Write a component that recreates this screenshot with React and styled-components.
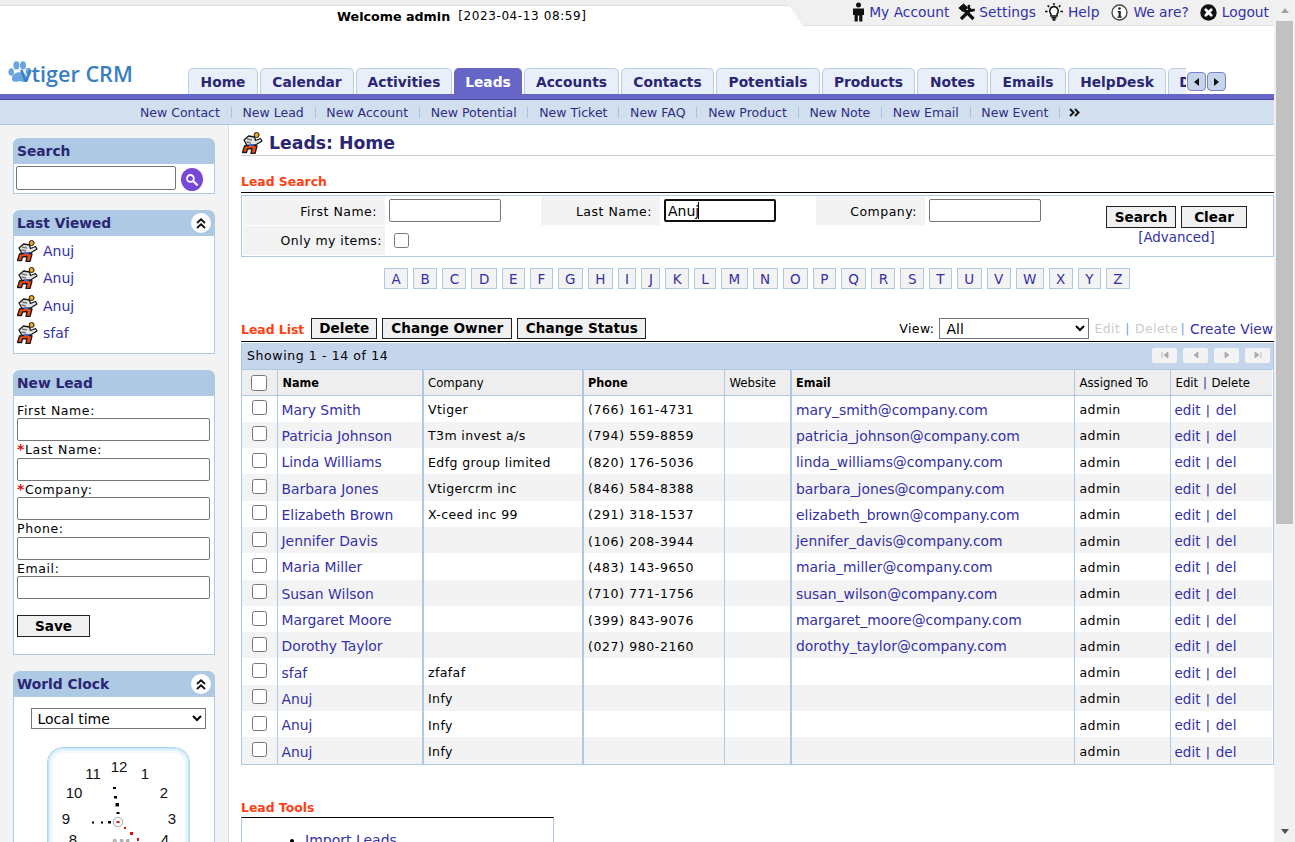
import React from 'react';
import styled, { createGlobalStyle, css } from 'styled-components';

const GlobalStyle = createGlobalStyle`
	html, body { margin: 0; padding: 0; height: 100%; overflow: hidden; background: #fff; }
	body { font-family: "DejaVu Sans", Verdana, sans-serif; font-size: 12.5px; color: #000; }
	* { box-sizing: border-box; }
	a { color: #2d2a8e; text-decoration: none; }
`;

const tabs = [
	['Home', 70], ['Calendar', 94], ['Activities', 96], ['Leads', 68], ['Accounts', 95], ['Contacts', 93],
	['Potentials', 104], ['Products', 93], ['Notes', 71], ['Emails', 76], ['HelpDesk', 98], ['Documents', 110],
];
const subLinks = ['New Contact', 'New Lead', 'New Account', 'New Potential', 'New Ticket', 'New FAQ', 'New Product', 'New Note', 'New Email', 'New Event'];
const letters = 'ABCDEFGHIJKLMNOPQRSTUVWXYZ'.split('');
const leads = [
	['Mary Smith', 'Vtiger', '(766) 161-4731', 'mary_smith@company.com'],
	['Patricia Johnson', 'T3m invest a/s', '(794) 559-8859', 'patricia_johnson@company.com'],
	['Linda Williams', 'Edfg group limited', '(820) 176-5036', 'linda_williams@company.com'],
	['Barbara Jones', 'Vtigercrm inc', '(846) 584-8388', 'barbara_jones@company.com'],
	['Elizabeth Brown', 'X-ceed inc 99', '(291) 318-1537', 'elizabeth_brown@company.com'],
	['Jennifer Davis', '', '(106) 208-3944', 'jennifer_davis@company.com'],
	['Maria Miller', '', '(483) 143-9650', 'maria_miller@company.com'],
	['Susan Wilson', '', '(710) 771-1756', 'susan_wilson@company.com'],
	['Margaret Moore', '', '(399) 843-9076', 'margaret_moore@company.com'],
	['Dorothy Taylor', '', '(027) 980-2160', 'dorothy_taylor@company.com'],
	['sfaf', 'zfafaf', '', ''],
	['Anuj', 'Infy', '', ''],
	['Anuj', 'Infy', '', ''],
	['Anuj', 'Infy', '', ''],
];

const LeadIcon = () => (
	<svg width="22" height="22" viewBox="0 0 22 22" style={{ flex: 'none' }}>
		<path d="M8 13 L3.5 14 L1.5 20.5 L5.5 20.5 L6.5 17 L11 16.5 L10 21.5 L14 21.5 L16 14 L11 13 Z" fill="#ee4a10" stroke="#1a1a1a" strokeWidth="1.3" strokeLinejoin="round" />
		<path d="M3 8 L7.5 4 L13.5 5 L14.5 8.5 L19.5 6.5 L21 9 L14.5 13 L6 13.5 Z" fill="#e4e4e4" stroke="#1a1a1a" strokeWidth="1.3" strokeLinejoin="round" />
		<path d="M6 7 L11 8 M5.5 10 L10 11" stroke="#777" strokeWidth="1.3" />
		<path d="M8 12.6 L13 12.2 L13 13.8 L8 14.2 Z" fill="#4a5ad8" />
		<circle cx="15.6" cy="3" r="2.5" fill="#f2a818" stroke="#1a1a1a" strokeWidth="1" />
	</svg>
);

const LogoMark = () => (
	<svg width="24" height="23" viewBox="0 0 24 23" style={{ flex: 'none' }}>
		<g fill="#69a6e0">
			<ellipse cx="3.2" cy="11" rx="2.8" ry="3.8" />
			<ellipse cx="8.4" cy="4.4" rx="3" ry="4.2" />
			<ellipse cx="15" cy="4.4" rx="3" ry="4.2" />
			<ellipse cx="20.4" cy="10.5" rx="2.8" ry="3.8" />
			<path d="M4 16 C6 9.5 17 9.5 19 16 C20 20.5 16.5 22 11.5 20 C7 22 3 20.5 4 16 Z" />
		</g>
	</svg>
);

const PersonIcon = () => (
	<svg width="13" height="20" viewBox="0 0 13 20"><circle cx="6.5" cy="3" r="2.5" fill="#111" /><path d="M1 6.5 H12 V13 H10.4 V19.5 H7.2 V13.5 H5.8 V19.5 H2.6 V13 H1 Z" fill="#111" /></svg>
);
const ToolsIcon = () => (
	<svg width="18" height="18" viewBox="0 0 18 18" fill="none" stroke="#111"><path d="M3 16 L13 6" strokeWidth="3.2" /><path d="M15.5 16 L6 6.5" strokeWidth="3.2" /><path d="M0.8 5 L5.6 1 L9.4 4.6 L5 8.6 Z" fill="#111" strokeWidth="1" /><path d="M11 1.8 L10.6 5.2 L13.4 7.6 L16.8 6.8" strokeWidth="2.6" /></svg>
);
const BulbIcon = () => (
	<svg width="18" height="18" viewBox="0 0 18 18" fill="none" stroke="#111" strokeWidth="1.5"><path d="M9 3.6 A4.4 4.4 0 0 1 12 11 V13 H6 V11 A4.4 4.4 0 0 1 9 3.6 Z" fill="#fff" /><path d="M6.6 14.8 H11.4 M7.6 16.8 H10.4" strokeWidth="1.8" /><path d="M9 0 V2.2 M2.6 2.4 L4.2 4 M15.4 2.4 L13.8 4 M0 8.4 H2.6 M15.4 8.4 H18" /></svg>
);
const InfoIcon = () => (
	<svg width="17" height="17" viewBox="0 0 17 17"><circle cx="8.5" cy="8.5" r="7.5" fill="#fff" stroke="#444" strokeWidth="1.3" /><circle cx="8.5" cy="4.5" r="1.3" fill="#222" /><path d="M6.6 7 H9.8 V12.6 H10.8 V13.8 H6.4 V12.6 H7.6 V8.2 H6.6 Z" fill="#222" /></svg>
);
const LogoutIcon = () => (
	<svg width="17" height="17" viewBox="0 0 17 17"><circle cx="8.5" cy="8.5" r="8.2" fill="#111" /><path d="M5.8 5.8 L11.2 11.2 M11.2 5.8 L5.8 11.2" stroke="#fff" strokeWidth="2.8" strokeLinecap="round" /></svg>
);
const Collapse = () => (
	<CollapseBtn>
		<svg width="10" height="11" viewBox="0 0 10 11" fill="none" stroke="#111" strokeWidth="1.9"><path d="M1 5 L5 1.4 L9 5" /><path d="M1 10 L5 6.4 L9 10" /></svg>
	</CollapseBtn>
);

const ClockFace = () => {
	const nums = [['12', 72, 25], ['11', 46, 32], ['1', 98, 32], ['10', 27, 51], ['2', 117, 51], ['9', 19, 77], ['3', 125, 77], ['8', 26, 98], ['4', 118, 98]];
	const dots = [[66, 40, 3, 2], [67, 49, 3, 2.5], [68.5, 56, 3.5, 3.5], [69.5, 65, 3, 2], [45, 74.5, 2, 2], [54, 74.5, 2, 2], [61, 74, 3, 2.5]];
	const red = [[77, 80, 2, 2], [83, 85, 3, 3], [90, 91, 2, 3]];
	return (
		<svg width="143" height="96" viewBox="0 0 143 96">
			<rect x="0.5" y="0.5" width="142" height="130" rx="15" fill="#fff" stroke="#a4d0ea" />
			<rect x="1.5" y="1.5" width="140" height="128" rx="14" fill="none" stroke="#c6e6f6" strokeWidth="1.5" />
			<rect x="3" y="3" width="137" height="125" rx="13" fill="none" stroke="#e0f2fb" strokeWidth="2" />
			<rect x="5" y="5" width="133" height="121" rx="12" fill="none" stroke="#f2fafe" strokeWidth="2" />
			{nums.map(([n, x, y]) => (
				<text key={n} x={x} y={y} textAnchor="middle" fontFamily="Liberation Sans" fontSize="15" fill="#111">{n}</text>
			))}
			{dots.map(([x, y, w, h], i) => <rect key={i} x={x} y={y} width={w} height={h} fill="#000" />)}
			<circle cx="71" cy="75" r="4.6" fill="#fff" stroke="#bbb" strokeWidth="1.4" />
			<rect x="69.5" y="74" width="3" height="2" fill="#e01010" />
			{red.map(([x, y, w, h], i) => <rect key={i} x={x} y={y} width={w} height={h} fill="#e01010" />)}
			<text x="73" y="101" textAnchor="middle" fontFamily="Liberation Sans" fontSize="13" fontWeight="700" fill="#aaa">AM</text>
		</svg>
	);
};

export default function App() {
	return (
		<Shell>
			<GlobalStyle />
			<Page>
				<TopStrip>
					<Welcome>
						<b>Welcome admin</b>
						<DateStamp>[2023-04-13 08:59]</DateStamp>
					</Welcome>
					<UserMenu>
						<UserLink $gap={4}><PersonIcon /><a href="#a">My Account</a></UserLink>
						<UserLink $gap={3} $ml={9}><ToolsIcon /><a href="#s">Settings</a></UserLink>
						<UserLink $gap={5} $ml={9}><BulbIcon /><a href="#h">Help</a></UserLink>
						<UserLink $gap={5} $ml={12}><InfoIcon /><a href="#w">We are?</a></UserLink>
						<UserLink $gap={5} $ml={11}><LogoutIcon /><a href="#l">Logout</a></UserLink>
					</UserMenu>
				</TopStrip>

				<BrandRow>
					<Logo><LogoMark /><LogoText>vtiger CRM</LogoText></Logo>
					<TabViewport>
						<TabTrack>
							{tabs.map(([name, w]) => (
								<Tab key={name} $w={w} $active={name === 'Leads'}>{name}</Tab>
							))}
						</TabTrack>
					</TabViewport>
					<Arrows>
						<ArrowBtn><Tri $left /></ArrowBtn>
						<ArrowBtn><Tri /></ArrowBtn>
					</Arrows>
				</BrandRow>
				<PurpleBar />
				<SubNav>
					{subLinks.map(l => (
						<React.Fragment key={l}>
							<SubLink href="#n">{l}</SubLink>
							<SubSep />
						</React.Fragment>
					))}
					<More>
						<svg width="11" height="9" viewBox="0 0 11 9" fill="none" stroke="#111" strokeWidth="2"><path d="M1 1 L4.5 4.5 L1 8" /><path d="M6 1 L9.5 4.5 L6 8" /></svg>
					</More>
				</SubNav>

				<Body>
					<Sidebar>
						<Panel $mb={16}>
							<PanelHead>Search</PanelHead>
							<SearchBody>
								<SideSearch />
								<SearchGo>
									<svg width="14" height="14" viewBox="0 0 14 14" fill="none" stroke="#fff"><circle cx="5.4" cy="5.4" r="3.4" strokeWidth="1.8" /><path d="M8 8 L12.6 12.4" strokeWidth="2.2" /></svg>
								</SearchGo>
							</SearchBody>
						</Panel>

						<Panel $mb={16}>
							<PanelHead>Last Viewed<Collapse /></PanelHead>
							<ViewedList>
								{['Anuj', 'Anuj', 'Anuj', 'sfaf'].map((n, i) => (
									<ViewedRow key={i}><LeadIcon /><a href="#v">{n}</a></ViewedRow>
								))}
							</ViewedList>
						</Panel>

						<Panel $mb={16}>
							<PanelHead>New Lead</PanelHead>
							<LeadForm>
								<FieldLabel>First Name:</FieldLabel><FieldInput />
								<FieldLabel><Req>*</Req>Last Name:</FieldLabel><FieldInput />
								<FieldLabel><Req>*</Req>Company:</FieldLabel><FieldInput />
								<FieldLabel>Phone:</FieldLabel><FieldInput />
								<FieldLabel>Email:</FieldLabel><FieldInput />
								<SaveBtn>Save</SaveBtn>
							</LeadForm>
						</Panel>

						<Panel>
							<PanelHead>World Clock<Collapse /></PanelHead>
							<ClockBody>
								<ClockSelect><option>Local time</option></ClockSelect>
								<ClockFace />
							</ClockBody>
						</Panel>
					</Sidebar>

					<Main>
						<PageTitle><LeadIcon />Leads: Home</PageTitle>

						<SectionTitle $top={17}>Lead Search</SectionTitle>
						<SearchBox>
							<SearchGrid>
								<SearchLabel $pr={8}>First Name:</SearchLabel>
								<SearchCell><SearchInput /></SearchCell>
								<SearchLabel $pr={8}>Last Name:</SearchLabel>
								<SearchCell>
									<SearchInput $focus defaultValue="Anuj" />
									<Caret />
								</SearchCell>
								<SearchLabel $pr={8}>Company:</SearchLabel>
								<SearchCell><SearchInput /></SearchCell>
								<SearchActions>
									<ActionRow>
										<SearchBtn $w={70}>Search</SearchBtn>
										<SearchBtn $w={66}>Clear</SearchBtn>
									</ActionRow>
									<AdvancedLink href="#adv">[Advanced]</AdvancedLink>
								</SearchActions>
								<SearchLabel $pr={3} $tight>Only my items:</SearchLabel>
								<SearchCell><OnlyCheck /></SearchCell>
							</SearchGrid>
						</SearchBox>

						<Alphabet>
							{letters.map(l => <Letter key={l} href="#l">{l}</Letter>)}
						</Alphabet>

						<ListBar>
							<ListLeft>
								<SectionTitle as="span">Lead List</SectionTitle>
								<SquareBtn $w={66} $ml={2}>Delete</SquareBtn>
								<SquareBtn $w={130}>Change Owner</SquareBtn>
								<SquareBtn $w={129}>Change Status</SquareBtn>
							</ListLeft>
							<ListRight>
								View:
								<ViewSelect><option>All</option></ViewSelect>
								<Muted>Edit</Muted>
								<Pipe>|</Pipe>
								<Muted>Delete</Muted>
								<Pipe $tight>|</Pipe>
								<CreateLink href="#cv">Create View</CreateLink>
							</ListRight>
						</ListBar>

						<ListBox>
							<PagerRow>
								Showing 1 - 14 of 14
								<Pager>
									{['M3 2 V8 M9 2 L5 5 L9 8 Z', 'M8 2 L4 5 L8 8 Z', 'M4 2 L8 5 L4 8 Z', 'M3 2 L7 5 L3 8 Z M9 2 V8'].map(d => (
										<PagerBtn key={d}><svg width="12" height="10" viewBox="0 0 12 10" fill="#aaa" stroke="#aaa" strokeWidth=".8"><path d={d} /></svg></PagerBtn>
									))}
								</Pager>
							</PagerRow>
							<Table>
								<colgroup>
									{[35, 146, 160, 141, 67, 283, 96, 102].map((w, i) => <col key={i} style={{ width: w }} />)}
								</colgroup>
								<thead>
									<tr>
										<Th $center><HeadCheck /></Th>
										<Th $pl={5}>Name</Th>
										<Th $regular $thick>Company</Th>
										<Th $thick>Phone</Th>
										<Th $regular $pl={5}>Website</Th>
										<Th $thick>Email</Th>
										<Th $regular $pl={5}>Assigned To</Th>
										<Th $regular $pl={5}>Edit <DarkPipe>|</DarkPipe> Delete</Th>
									</tr>
								</thead>
								<tbody>
									{leads.map((r, i) => (
										<Row key={i} $alt={i % 2 === 1}>
											<Td $center><RowCheck /></Td>
											<Td><a href="#r">{r[0]}</a></Td>
											<Td $thick>{r[1]}</Td>
											<Td $thick $wide>{r[2]}</Td>
											<Td />
											<Td $thick><a href="#m">{r[3]}</a></Td>
											<Td $pl={5}>admin</Td>
											<Td><ActionLink href="#e">edit</ActionLink> <DarkPipe>|</DarkPipe> <ActionLink href="#d">del</ActionLink></Td>
										</Row>
									))}
								</tbody>
							</Table>
						</ListBox>

						<SectionTitle $top={34}>Lead Tools</SectionTitle>
						<ToolsBox>
							<ul><li><a href="#i">Import Leads</a></li></ul>
						</ToolsBox>
					</Main>
				</Body>
			</Page>
			<ScrollRail>
				<ScrollArrow />
				<ScrollThumb />
				<ScrollArrow $down />
			</ScrollRail>
		</Shell>
	);
}

const Shell = styled.div`
	display: flex;
	height: 842px;
	width: 1295px;
	overflow: hidden;
`;

const Page = styled.div`
	width: 1274px;
	flex: none;
	overflow: hidden;
`;

const ScrollRail = styled.div`
	width: 21px;
	flex: none;
	display: flex;
	flex-direction: column;
	align-items: center;
	background: #f1f1f1;
`;

const ScrollArrow = styled.div`
	flex: none;
	height: 21px;
	width: 100%;
	display: flex;
	align-items: center;
	justify-content: center;
	&::before {
		content: '';
		border-left: 4.5px solid transparent;
		border-right: 4.5px solid transparent;
		${p => (p.$down ? 'border-top: 5px solid #505050;' : 'border-bottom: 5px solid #a3a3a3;')}
	}
`;

const ScrollThumb = styled.div`
	width: 17px;
	height: 503px;
	background: #c1c1c1;
	margin-bottom: auto;
`;

const TopStrip = styled.div`
	height: 26px;
	display: flex;
	background: linear-gradient(#eeeeee 0 5px, #dddddd 5px 6px, #ffffff 6px);
`;

const Welcome = styled.div`
	width: 785px;
	padding: 9px 0 0 337px;
	display: flex;
	gap: 8px;
	font-size: 12.7px;
	white-space: nowrap;
	b { font-weight: 700; }
`;

const DateStamp = styled.span`
	font-size: 12px;
	letter-spacing: 0.6px;
`;

const UserMenu = styled.div`
	flex: 1;
	display: flex;
	justify-content: flex-end;
	align-items: center;
	padding: 0 5px 1px 0;
	background: #f0f0f0;
	border-bottom: 1px solid #e2e2e2;
	clip-path: polygon(0 0, 100% 0, 100% 100%, 18px 100%);
	font-size: 13.8px;
`;

const UserLink = styled.span`
	display: inline-flex;
	align-items: center;
	gap: ${p => p.$gap}px;
	margin-left: ${p => p.$ml || 0}px;
	a { color: #3330a8; }
`;

const BrandRow = styled.div`
	height: 68px;
	display: flex;
	align-items: flex-end;
`;

const Logo = styled.div`
	width: 188px;
	height: 38px;
	padding: 5px 0 0 8px;
	display: flex;
	align-items: flex-start;
`;

const LogoText = styled.span`
	font-family: "Open Sans", sans-serif;
	font-size: 21.6px;
	font-weight: 600;
	color: #3a7ec4;
	margin: -1px 0 0 -12px;
	line-height: 28px;
	white-space: nowrap;
`;

const TabViewport = styled.div`
	width: 998px;
	overflow: hidden;
`;

const TabTrack = styled.div`
	display: flex;
	gap: 2px;
	width: max-content;
`;

const Tab = styled.div`
	width: ${p => p.$w}px;
	height: 26px;
	flex: none;
	display: flex;
	align-items: center;
	justify-content: center;
	padding-top: 1px;
	border: 1px solid #b8cfe6;
	border-bottom: 0;
	border-radius: 5px 5px 0 0;
	font-size: 13.8px;
	font-weight: 700;
	background: ${p => (p.$active ? '#6665c8' : '#e9eff8')};
	color: ${p => (p.$active ? '#ffffff' : '#2a2673')};
	${p => p.$active && css`border-color: #6665c8;`}
`;

const Arrows = styled.div`
	display: flex;
	gap: 1px;
	height: 26px;
	margin-left: 1px;
	padding-top: 4px;
`;

const ArrowBtn = styled.div`
	width: 19px;
	height: 19px;
	border: 1px solid #8080c8;
	border-radius: 4px;
	background: #c5d5eb;
	display: flex;
	align-items: center;
	justify-content: center;
`;

const Tri = styled.span`
	border-top: 4.5px solid transparent;
	border-bottom: 4.5px solid transparent;
	${p => (p.$left ? 'border-right: 5px solid #111;' : 'border-left: 5px solid #111;')}
`;

const PurpleBar = styled.div`
	height: 6px;
	background: #6665c8;
	border-bottom: 1px solid #4b4aa8;
`;

const SubNav = styled.div`
	height: 25px;
	padding-left: 140px;
	display: flex;
	align-items: center;
	background: #d2dfef;
	border-bottom: 1px solid #aecbe4;
`;

const SubLink = styled.a`
	color: #2f2c82;
	white-space: nowrap;
`;

const SubSep = styled.span`
	width: 1px;
	height: 11px;
	margin: 0 10.8px;
	background: #a9c3de;
`;

const More = styled.span`
	display: flex;
	margin-left: -2px;
`;

const Body = styled.div`
	display: flex;
	height: 718px;
	overflow: hidden;
`;

const Sidebar = styled.div`
	width: 229px;
	flex: none;
	padding: 13px 13px 0;
	background: #f3f3f3;
	border-right: 1px solid #dddddd;
`;

const Panel = styled.section`
	width: 202px;
	margin-bottom: ${p => p.$mb || 0}px;
	background: #fff;
	border: 1px solid #aec9e3;
	border-top: 0;
	border-radius: 7px 7px 0 0;
`;

const PanelHead = styled.div`
	height: 26px;
	margin: 0 -1px;
	padding: 0 4px 0 4px;
	display: flex;
	align-items: center;
	justify-content: space-between;
	background: #aec9e3;
	border-radius: 7px 7px 0 0;
	color: #2a2673;
	font-size: 13.8px;
	font-weight: 700;
`;

const CollapseBtn = styled.span`
	width: 20px;
	height: 20px;
	border-radius: 50%;
	background: #fff;
	display: flex;
	align-items: center;
	justify-content: center;
`;

const SearchBody = styled.div`
	height: 29px;
	padding: 2px 0 0 2px;
	display: flex;
	gap: 5px;
`;

const SideSearch = styled.input`
	width: 160px;
	height: 24px;
	border: 1px solid #767676;
	border-radius: 2px;
`;

const SearchGo = styled.span`
	width: 22px;
	height: 23px;
	margin-top: 2px;
	border-radius: 50%;
	background: #7748d8;
	display: flex;
	align-items: center;
	justify-content: center;
`;

const ViewedList = styled.div`
	padding: 1.5px 2px 6.5px;
`;

const ViewedRow = styled.div`
	height: 27.3px;
	display: flex;
	align-items: center;
	gap: 5px;
	font-size: 14px;
	a { color: #3330a8; }
`;

const LeadForm = styled.div`
	padding: 5px 3px 0;
	height: 258px;
`;

const FieldLabel = styled.div`
	height: 17px;
	padding-top: 0.4px;
	line-height: 17px;
	letter-spacing: 0.6px;
	white-space: nowrap;
`;

const Req = styled.span`
	color: #e01010;
	font-weight: 700;
	font-size: 14px;
`;

const FieldInput = styled.input`
	display: block;
	width: 193px;
	height: 23px;
	margin-bottom: -0.5px;
	border: 1px solid #767676;
	border-radius: 2px;
`;

const SquareBtn = styled.button`
	height: 21px;
	width: ${p => p.$w}px;
	margin-left: ${p => p.$ml || 0}px;
	padding: 0;
	border: 1px solid #222;
	background: #f0f0f0;
	font: 700 13.6px "DejaVu Sans", sans-serif;
	color: #000;
	white-space: nowrap;
`;

const SearchBtn = styled(SquareBtn)`
	height: 22px;
`;

const SaveBtn = styled(SquareBtn).attrs({ $w: 73 })`
	display: block;
	height: 22px;
	margin-top: 16px;
`;

const ClockBody = styled.div`
	height: 150px;
	padding: 11px 0 0 8px;
	display: flex;
	flex-direction: column;
	align-items: center;
`;

const ClockSelect = styled.select`
	width: 175px;
	height: 21px;
	margin-bottom: 18px;
	padding-left: 2px;
	border: 1px solid #767676;
	background: #fff;
	font: 14px "DejaVu Sans", sans-serif;
`;

const Main = styled.main`
	flex: 1;
	min-width: 0;
	padding: 3px 0 0 12px;
`;

const PageTitle = styled.h1`
	margin: 0;
	height: 28px;
	padding-top: 3px;
	display: flex;
	align-items: center;
	gap: 6px;
	font-size: 17.3px;
	font-weight: 700;
	color: #2a2673;
	border-bottom: 1px solid #cccccc;
`;

const SectionTitle = styled.div`
	margin-top: ${p => p.$top || 0}px;
	font-size: 12.4px;
	font-weight: 700;
	color: #ff4010;
	line-height: 18px;
`;

const SearchBox = styled.div`
	height: 65px;
	margin-top: 1px;
	padding: 1px 1px 0;
	border-top: 1px solid #000;
	position: relative;
	&::after {
		content: '';
		position: absolute;
		inset: 2px 0 0;
		border: 1px solid #aec9e3;
		pointer-events: none;
	}
`;

const SearchGrid = styled.div`
	display: grid;
	grid-template-columns: 142px 156px 119px 156px 109px 165px 173px;
	grid-auto-rows: 29px;
	row-gap: 1px;
	padding: 2px 0 0 1px;
`;

const SearchLabel = styled.div`
	display: flex;
	align-items: center;
	justify-content: flex-end;
	padding: ${p => (p.$tight ? 0 : 1)}px ${p => p.$pr}px 0 0;
	background: #f3f3f3;
	letter-spacing: ${p => (p.$tight ? '0.45px' : '0.5px')};
	white-space: nowrap;
`;

const SearchCell = styled.div`
	position: relative;
	display: flex;
	align-items: center;
	padding-left: 4px;
`;

const SearchInput = styled.input`
	width: 112px;
	height: 23px;
	padding: 0 2px;
	border: ${p => (p.$focus ? '2px solid #101010' : '1px solid #767676')};
	border-radius: 2px;
	font: 14px "DejaVu Sans", sans-serif;
`;

const Caret = styled.span`
	position: absolute;
	left: 38px;
	top: 6px;
	width: 1px;
	height: 17px;
	background: #000;
`;

const SearchActions = styled.div`
	grid-row: span 2;
	display: flex;
	flex-direction: column;
	align-items: center;
	padding-top: 10px;
`;

const ActionRow = styled.div`
	display: flex;
	gap: 5px;
`;

const AdvancedLink = styled.a`
	margin-top: 2px;
	font-size: 13.4px;
	line-height: 16px;
	color: #3330a8;
`;

const Check = styled.input.attrs({ type: 'checkbox' })`
	width: 15px;
	height: 15px;
	margin: 0;
	vertical-align: middle;
`;

const OnlyCheck = styled(Check)`
	margin: -1px 0 0 5px;
`;

const HeadCheck = styled(Check)`
	width: 16px;
	height: 16px;
`;

const RowCheck = styled(Check)`
	margin-top: -6px;
`;

const Alphabet = styled.div`
	margin-top: 11px;
	display: flex;
	justify-content: center;
	gap: 5px;
	padding-right: 1px;
`;

const Letter = styled.a`
	height: 21px;
	padding: 0 6.4px;
	display: flex;
	align-items: center;
	justify-content: center;
	border: 1px solid #aec9e3;
	background: #f3f3f3;
	color: #3330a8;
	font-size: 13.5px;
`;

const ListBar = styled.div`
	margin-top: 29px;
	height: 24px;
	display: flex;
	align-items: flex-end;
	justify-content: space-between;
	padding: 0 1px 2px 0;
	border-bottom: 1px solid #000;
`;

const ListLeft = styled.div`
	display: flex;
	align-items: center;
	gap: 5px;
	span { margin-top: 4px; }
`;

const ListRight = styled.div`
	display: flex;
	align-items: center;
	gap: 5px;
	white-space: nowrap;
	letter-spacing: 0.4px;
`;

const CreateLink = styled.a`
	color: #3330a8;
	font-size: 13.8px;
	letter-spacing: 0;
`;

const ViewSelect = styled.select`
	width: 150px;
	height: 21px;
	padding-left: 2px;
	border: 1px solid #767676;
	background: #fff;
	font: 14px "DejaVu Sans", sans-serif;
`;

const Muted = styled.span`
	color: #cccccc;
`;

const Pipe = styled.span`
	color: #6fa0d8;
	margin-left: ${p => (p.$tight ? '-3px' : '0')};
`;

const DarkPipe = styled.span`
	color: #2d2a8e;
	margin: 0 1px;
`;

const ActionLink = styled.a`
	&& { font-size: 13.5px; }
`;

const ListBox = styled.div`
	margin-top: 1px;
	border: 1px solid #aec9e3;
	border-top: 0;
`;

const PagerRow = styled.div`
	height: 26px;
	padding: 0 3px 2px 5px;
	display: flex;
	align-items: center;
	justify-content: space-between;
	background: #c5d5eb;
	letter-spacing: 0.6px;
`;

const Pager = styled.div`
	display: flex;
	gap: 6px;
`;

const PagerBtn = styled.span`
	width: 25px;
	height: 15px;
	border-radius: 2px;
	background: #f3f3f3;
	display: flex;
	align-items: center;
	justify-content: center;
`;

const Table = styled.table`
	width: 1030px;
	table-layout: fixed;
	border-collapse: collapse;
`;

const cellBase = css`
	padding: 0 4px 0 ${p => p.$pl || 4}px;
	text-align: ${p => (p.$center ? 'center' : 'left')};
	border-left: ${p => (p.$thick ? '2px' : '1px')} solid #aec9e3;
	&:first-child { border-left: 0; }
	white-space: nowrap;
	overflow: hidden;
`;

const Th = styled.th`
	${cellBase}
	height: 26px;
	background: #eeeeee;
	border-top: 1px solid #aec9e3;
	border-bottom: 1px solid #aec9e3;
	font-family: "DejaVu Sans Condensed", "DejaVu Sans", sans-serif;
	font-weight: ${p => (p.$regular ? 400 : 700)};
	font-size: ${p => (p.$regular ? '13px' : '12.5px')};
`;

const Row = styled.tr`
	height: 26.3px;
	background: ${p => (p.$alt ? '#f3f3f3' : '#ffffff')};
`;

const Td = styled.td`
	${cellBase}
	height: 26.3px;
	padding-top: 2px;
	letter-spacing: ${p => (p.$wide ? '0.6px' : '0.4px')};
	a { color: #3330a8; font-size: 13.9px; letter-spacing: 0; }
`;

const ToolsBox = styled.div`
	width: 313px;
	height: 60px;
	border: 1px solid #aec9e3;
	border-top: 1px solid #000;
	ul { margin: 14px 0 0; padding-left: 63px; }
	a { color: #3330a8; font-size: 14px; }
`;
